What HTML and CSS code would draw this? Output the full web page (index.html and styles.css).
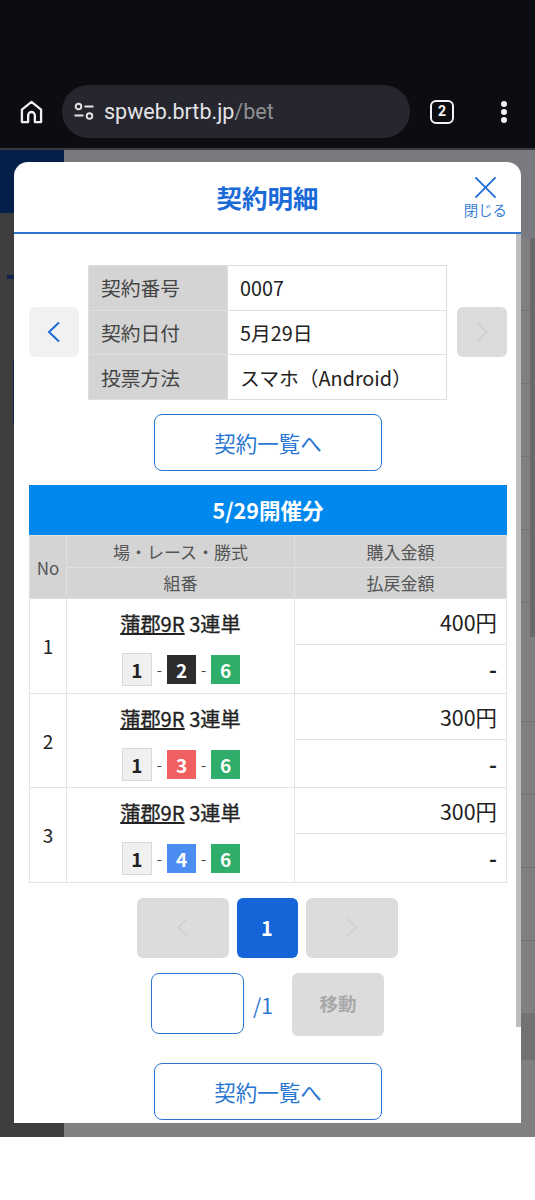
FILE: index.html
```html
<!DOCTYPE html>
<html lang="ja">

<head>
  <meta charset="UTF-8" />
  <title>契約明細</title>
  <meta name="viewport" content="width=device-width, initial-scale=1.0" />
  <link rel="stylesheet" href="styles.css">
</head>

<body>

  <!-- browser toolbar -->
  <div class="chrome">
    <svg class="home-icon" viewBox="0 0 24 24" fill="none" stroke="#f2f2f2" stroke-width="2.4" stroke-linejoin="round">
      <path d="M2 22.500V9.500L12 1.500l10 8v13h-6.500v-7a3.500 3.500 0 0 0-7 0v7z" />
    </svg>
    <div class="urlbar">
      <svg class="tune-icon" viewBox="0 0 20 20" fill="none" stroke="#e4e4e6" stroke-width="1.900">
        <circle cx="4.500" cy="4.500" r="2.800" />
        <path d="M10.500 4.500h9M.5 13.500h9" />
        <circle cx="15.500" cy="14" r="2.800" />
      </svg>
      <span class="url">spweb.brtb.jp<span class="url-path">/bet</span></span>
    </div>
    <div class="tab-count">2</div>
    <div class="menu-dots"><i></i><i></i><i></i></div>
  </div>

  <!-- dimmed page behind the modal -->
  <div class="backdrop">
    <div class="back-side">
      <div class="back-logo"></div>
      <div class="back-mark"></div>
      <div class="back-line"></div>
    </div>
    <div class="back-main">
      <div class="back-top"></div>
      <div class="back-rows">
        <div class="back-col"></div>
        <div class="back-row"></div>
        <div class="back-row"></div>
        <div class="back-row"></div>
        <div class="back-row"></div>
        <div class="back-row"></div>
        <div class="back-row tall"></div>
        <div class="back-row"></div>
        <div class="back-row"></div>
        <div class="back-row"></div>
        <div class="back-row"></div>
        <div class="back-band"></div>
      </div>
    </div>
  </div>

  <div class="modal">
    <div class="modal-head">
      <h1>契約明細</h1>
      <div class="close">
        <svg viewBox="0 0 24 24" fill="none" stroke="#1a6ad8" stroke-width="1.800">
          <path d="M1.500 1.500l21 21M22.500 1.500l-21 21" />
        </svg>
        <span>閉じる</span>
      </div>
    </div>

    <div class="modal-body">
      <div class="contract">
        <div class="nav-btn">
          <svg viewBox="0 0 14 22" fill="none" stroke="#1a6ad8" stroke-width="2">
            <path d="M12 1.500L2 11l10 9.500" />
          </svg>
        </div>
        <table class="info">
          <tr><th>契約番号</th><td>0007</td></tr>
          <tr><th>契約日付</th><td>5月29日</td></tr>
          <tr><th>投票方法</th><td>スマホ（Android）</td></tr>
        </table>
        <div class="nav-btn disabled">
          <svg viewBox="0 0 14 22" fill="none" stroke="#cbcbcb" stroke-width="1.600">
            <path d="M2 1.500L12 11 2 20.500" />
          </svg>
        </div>
      </div>

      <a class="list-btn">契約一覧へ</a>

      <div class="day-title">5/29開催分</div>
      <table class="bets">
        <thead>
          <tr>
            <th class="col-no" rowspan="2">No</th>
            <th class="col-race">場・レース・勝式</th>
            <th>購入金額</th>
          </tr>
          <tr>
            <th>組番</th>
            <th>払戻金額</th>
          </tr>
        </thead>
        <tbody>
          <tr>
            <td class="no" rowspan="2">1</td>
            <td class="race" rowspan="2">
              <div class="race-name"><u>蒲郡9R</u> 3連単</div>
              <div class="combo"><b class="boat b1">1</b>-<b class="boat b2">2</b>-<b class="boat b6">6</b></div>
            </td>
            <td class="amount">400円</td>
          </tr>
          <tr><td class="refund">-</td></tr>
          <tr>
            <td class="no" rowspan="2">2</td>
            <td class="race" rowspan="2">
              <div class="race-name"><u>蒲郡9R</u> 3連単</div>
              <div class="combo"><b class="boat b1">1</b>-<b class="boat b3">3</b>-<b class="boat b6">6</b></div>
            </td>
            <td class="amount">300円</td>
          </tr>
          <tr><td class="refund">-</td></tr>
          <tr>
            <td class="no" rowspan="2">3</td>
            <td class="race" rowspan="2">
              <div class="race-name"><u>蒲郡9R</u> 3連単</div>
              <div class="combo"><b class="boat b1">1</b>-<b class="boat b4">4</b>-<b class="boat b6">6</b></div>
            </td>
            <td class="amount">300円</td>
          </tr>
          <tr><td class="refund">-</td></tr>
        </tbody>
      </table>

      <div class="pager">
        <div class="page-btn">
          <svg viewBox="0 0 14 22" fill="none" stroke="#cfcfcf" stroke-width="1.600">
            <path d="M12 1.500L2 11l10 9.500" />
          </svg>
        </div>
        <div class="page-num">1</div>
        <div class="page-btn">
          <svg viewBox="0 0 14 22" fill="none" stroke="#cfcfcf" stroke-width="1.600">
            <path d="M2 1.500L12 11 2 20.500" />
          </svg>
        </div>
      </div>

      <div class="jump">
        <input class="jump-input" type="text">
        <span class="jump-total">/1</span>
        <div class="jump-btn">移動</div>
      </div>

      <a class="list-btn bottom">契約一覧へ</a>
    </div>
    <div class="scrollbar"></div>
  </div>

</body>

</html>
```

FILE: styles.css
```css
/* ─── BASE ───────────────────────────────────────────────────────── */
* {
  box-sizing: border-box;
  margin: 0;
  padding: 0;
}

html,
body {
  height: 1200px;
  background: #fff;
  font-family: "Noto Sans CJK JP", "Noto Sans", sans-serif;
  overflow: hidden;
}

body {
  position: relative;
}

/* ─── BROWSER TOOLBAR ────────────────────────────────────────────── */
.chrome {
  height: 150px;
  padding: 85px 0 0 20px;
  display: flex;
  align-items: flex-start;
  background: #0c0d11;
  border-bottom: 2px solid #3a3b40;
}

.home-icon {
  width: 23px;
  height: 24px;
  margin-top: 15px;
}

.urlbar {
  width: 348px;
  height: 53px;
  margin-left: 19px;
  padding-left: 12px;
  display: flex;
  align-items: center;
  gap: 10px;
  background: #26272e;
  border-radius: 27px;
}

.tune-icon {
  width: 20px;
  height: 20px;
}

.url {
  font-family: Roboto, sans-serif;
  font-size: 21.500px;
  color: #e4e4e6;
}

.url-path {
  color: #8f9094;
}

.tab-count {
  width: 24px;
  height: 24px;
  margin: 15px 0 0 20px;
  border: 2.500px solid #f2f2f2;
  border-radius: 6px;
  color: #f2f2f2;
  font: 700 14px/19px Roboto, sans-serif;
  text-align: center;
}

.menu-dots {
  margin: 16px 0 0 47px;
  display: flex;
  flex-direction: column;
  gap: 2px;
}

.menu-dots i {
  width: 6px;
  height: 6px;
  border-radius: 50%;
  background: #f2f2f2;
}

/* ─── DIMMED PAGE ────────────────────────────────────────────────── */
.backdrop {
  height: 987px;
  display: flex;
  background: #808080;
}

.back-side {
  width: 64px;
  background: #3e3e3e;
  position: relative;
}

.back-logo {
  height: 63px;
  background: #04204a;
}

.back-mark {
  position: absolute;
  top: 125px;
  left: 7px;
  width: 7px;
  height: 4px;
  background: #10264a;
}

.back-line {
  position: absolute;
  top: 209px;
  left: 13px;
  width: 1px;
  height: 66px;
  background: #10264a;
}

.back-main {
  flex: 1;
  display: flex;
  flex-direction: column;
}

.back-top {
  height: 88px;
  background: #787a80;
}

.back-rows {
  flex: 1;
  position: relative;
}

.back-col {
  position: absolute;
  top: 0;
  right: 0;
  width: 5px;
  height: 399px;
  background: #6a6a6a;
}

.back-row {
  height: 73px;
  border-bottom: 1px solid #727272;
}

.back-row.tall {
  height: 119px;
}

.back-band {
  height: 46px;
  background: #727272;
}

/* ─── MODAL ──────────────────────────────────────────────────────── */
.modal {
  position: absolute;
  top: 162px;
  left: 14px;
  width: 507px;
  height: 961px;
  background: #fff;
  border-radius: 14px 14px 0 0;
  overflow: hidden;
}

.modal-head {
  height: 72px;
  display: flex;
  align-items: center;
  justify-content: center;
  position: relative;
  border-bottom: 2px solid #2a76d2;
}

.modal-head h1 {
  font-size: 25.500px;
  font-weight: 700;
  color: #1a6ad8;
  padding-bottom: 2px;
}

.close {
  position: absolute;
  top: 14px;
  right: 14px;
  display: flex;
  flex-direction: column;
  align-items: center;
  gap: 3px;
  color: #3c7fd6;
  font-size: 14.400px;
  line-height: 16px;
}

.close svg {
  width: 23px;
  height: 23px;
}

.modal-body {
  padding: 31px 14px 0 15px;
}

/* ─── CONTRACT INFO ──────────────────────────────────────────────── */
.contract {
  display: flex;
  align-items: center;
  justify-content: space-between;
}

.nav-btn {
  width: 50px;
  height: 50px;
  margin-bottom: 2px;
  display: flex;
  align-items: center;
  justify-content: center;
  background: #f1f1f1;
  border-radius: 6px;
}

.nav-btn.disabled {
  background: #dcdcdc;
}

.nav-btn svg {
  width: 14px;
  height: 22px;
}

.info {
  width: 359px;
  height: 135px;
  margin-right: 1px;
  border-collapse: collapse;
  font-size: 19.800px;
  color: #222;
}

.info th,
.info td {
  border: 1px solid #dedede;
  text-align: left;
  padding-left: 12px;
  font-weight: 400;
}

.info th {
  width: 139px;
  background: #d4d4d4;
  color: #444;
}

.list-btn {
  display: block;
  width: 228px;
  height: 57px;
  margin: 14px auto;
  border: 1px solid #2a76d2;
  border-radius: 8px;
  color: #2a76d2;
  font-size: 21.500px;
  line-height: 55px;
  text-align: center;
}

.list-btn.bottom {
  margin: 25px auto 0;
}

/* ─── BET TABLE ──────────────────────────────────────────────────── */
.day-title {
  height: 50px;
  background: #0088ee;
  color: #fff;
  font-size: 21.500px;
  font-weight: 700;
  line-height: 49px;
  text-align: center;
}

.bets {
  width: 478px;
  border-collapse: collapse;
  table-layout: fixed;
  color: #222;
}

.bets th,
.bets td {
  border: 1px solid #e4e4e4;
}

.bets th {
  height: 31.500px;
  background: #d4d4d4;
  border-color: #e0e0e0;
  color: #555;
  font-size: 17px;
  font-weight: 400;
}

.col-no {
  width: 37px;
}

.col-race {
  width: 228px;
}

.no {
  text-align: center;
  font-size: 19px;
}

.race {
  padding-top: 11px;
  text-align: center;
  vertical-align: top;
}

.race-name {
  font-size: 20.200px;
  -webkit-text-stroke: 0.300px #222;
  line-height: 28px;
}

.race-name u {
  text-decoration-thickness: 2px;
}

.combo {
  margin-top: 15px;
  padding-left: 1px;
  display: flex;
  align-items: center;
  justify-content: center;
  gap: 5px;
  font-size: 15px;
  color: #444;
}

.boat {
  width: 29px;
  height: 29px;
  color: #fff;
  font-size: 19px;
  line-height: 29px;
  -webkit-text-stroke: 0;
}

.b1 {
  width: 30px;
  height: 33px;
  line-height: 32px;
  background: #f0f0f0;
  border: 1px solid #d8d8d8;
  color: #222;
}

.b2 {
  background: #2d2d2d;
}

.b3 {
  background: #f06060;
}

.b4 {
  background: #4a8cf0;
}

.b6 {
  background: #2eae6a;
}

.amount,
.refund {
  height: 46px;
  padding-right: 9px;
  text-align: right;
  font-size: 21.400px;
}

.refund {
  height: 48.500px;
  font-weight: 700;
}

/* ─── PAGER ──────────────────────────────────────────────────────── */
.pager {
  margin-top: 15px;
  padding-right: 2px;
  display: flex;
  justify-content: center;
  gap: 8px;
}

.page-btn {
  width: 92px;
  height: 60px;
  display: flex;
  align-items: center;
  justify-content: center;
  background: #dcdcdc;
  border-radius: 6px;
}

.page-btn svg {
  width: 13px;
  height: 21px;
}

.page-num {
  width: 61px;
  height: 60px;
  background: #1565d8;
  border-radius: 6px;
  color: #fff;
  font-size: 20px;
  font-weight: 700;
  line-height: 59px;
  text-align: center;
}

.jump {
  margin-top: 15px;
  padding-left: 122px;
  display: flex;
  align-items: flex-start;
}

.jump-input {
  width: 93px;
  height: 61px;
  border: 1px solid #2a76d2;
  border-radius: 8px;
  background: #fff;
}

.jump-total {
  width: 48px;
  padding-left: 9px;
  color: #2a76d2;
  font-size: 21px;
  line-height: 65px;
}

.jump-btn {
  width: 92px;
  height: 63px;
  background: #dcdcdc;
  border-radius: 6px;
  color: #a8a8a8;
  font-size: 18.500px;
  font-weight: 700;
  line-height: 61px;
  text-align: center;
}

/* scrollbar thumb lies over the modal edge */
.scrollbar {
  position: absolute;
  top: 72px;
  right: 0;
  width: 5px;
  height: 793px;
  background: #bdbdbd;
}
```
